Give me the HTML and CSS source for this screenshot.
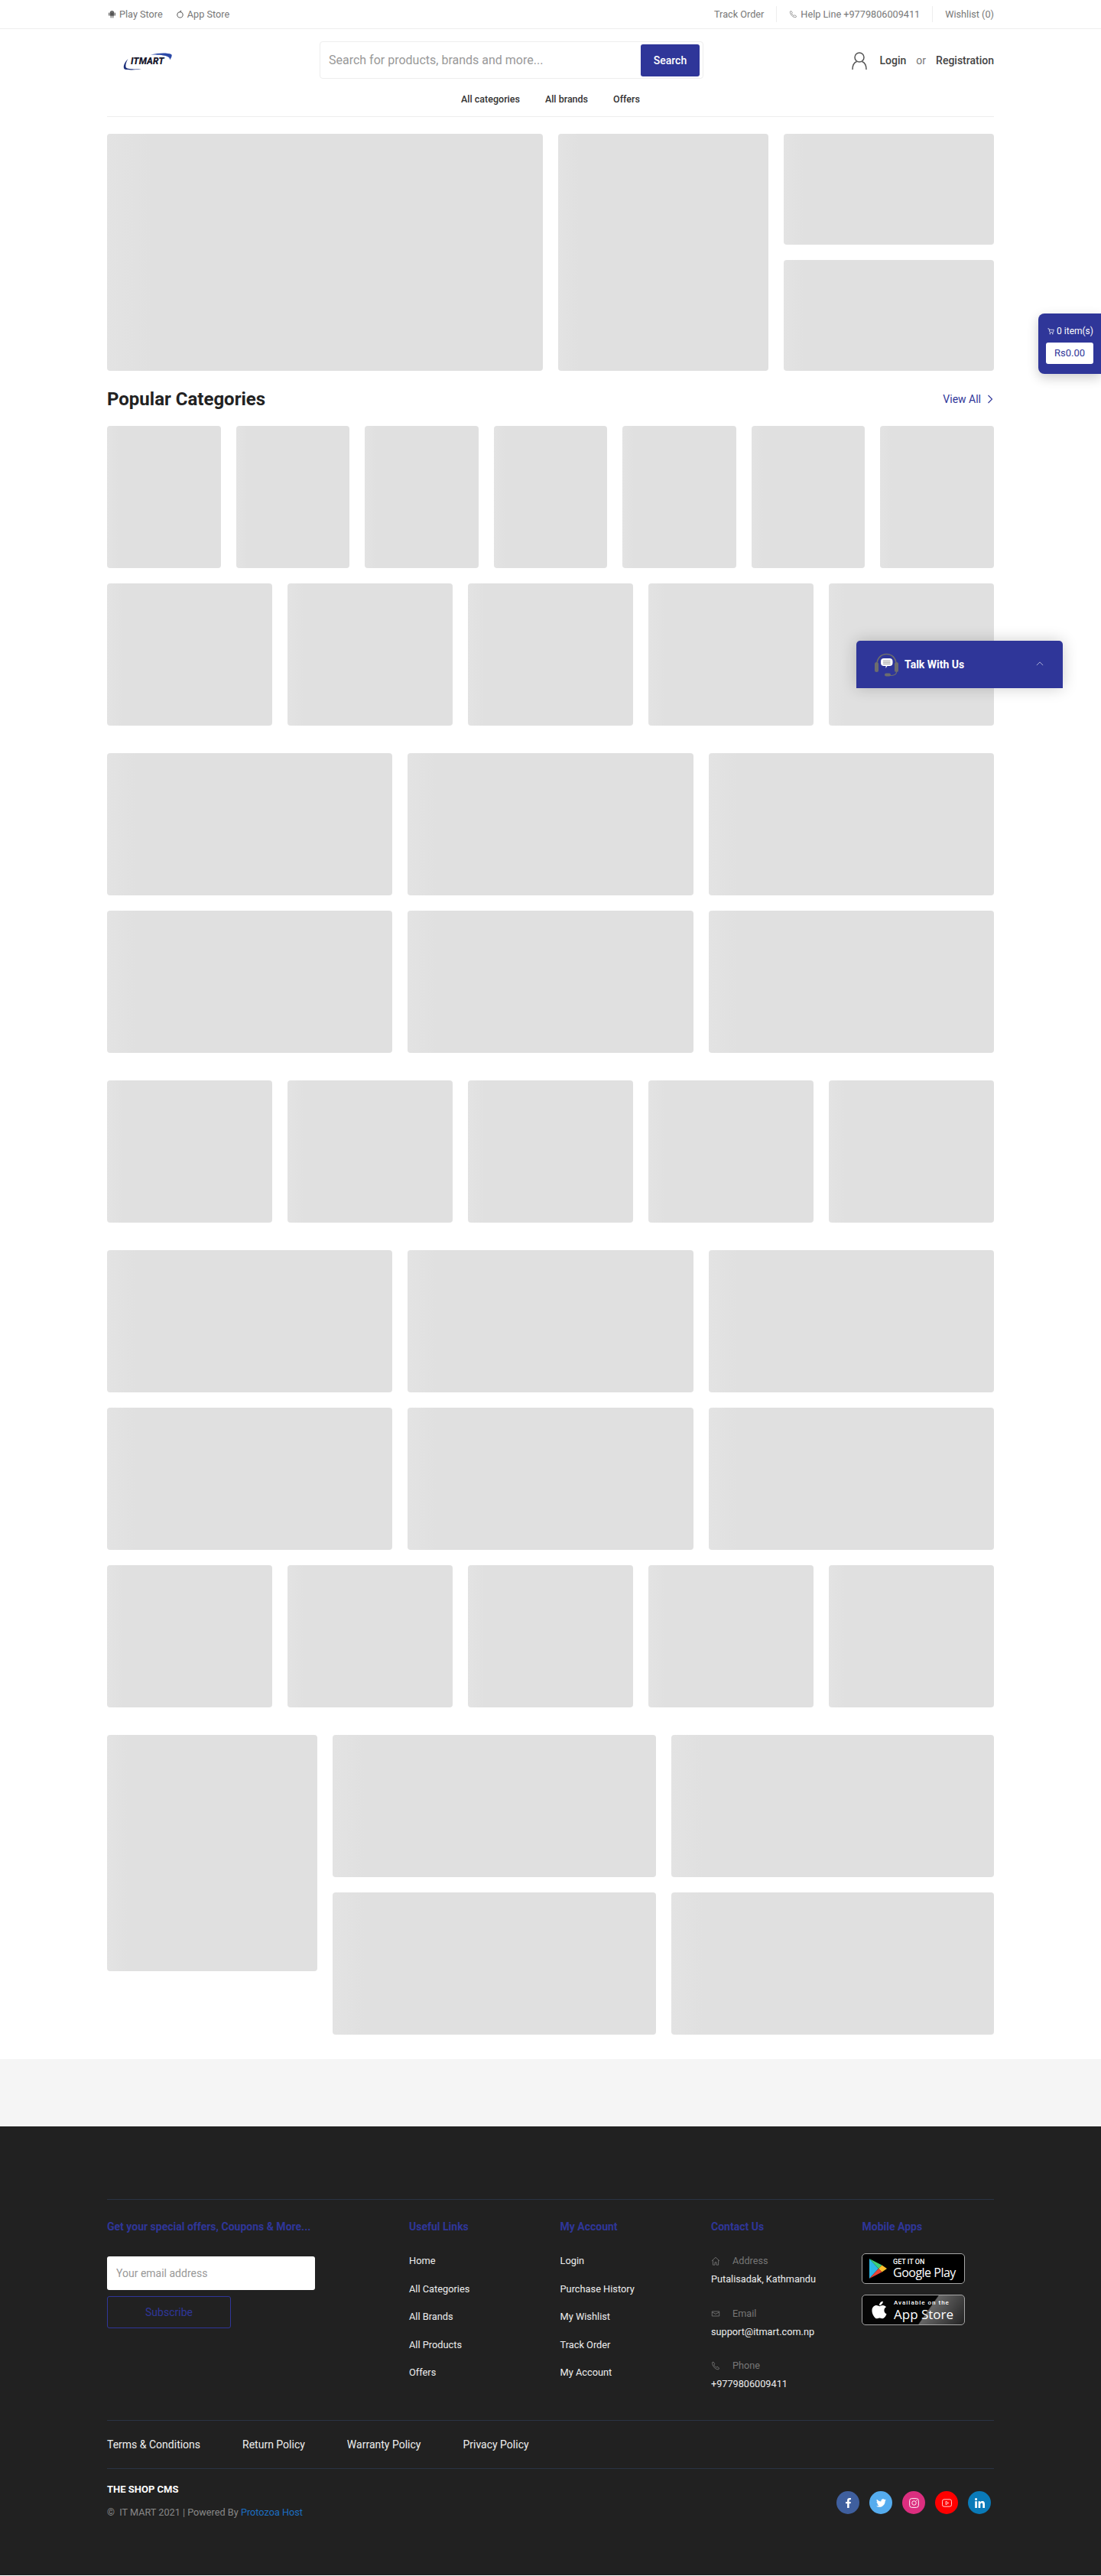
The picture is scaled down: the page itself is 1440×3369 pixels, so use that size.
FILE: index.html
```html
<!DOCTYPE html>
<html lang="en">
<head>
  <meta charset="UTF-8">
  <meta name="viewport" content="width=device-width, initial-scale=1.0">
  <title>IT Mart</title>
  <link rel="stylesheet" href="styles.css">
</head>
<body>
  <div class="top-bar">
    <div class="container top-bar-inner">
      <div class="top-links">
        <a class="top-link" href="#">
          <svg class="top-icon" viewBox="0 0 12 12"><path d="M3 4.2a3 3 0 0 1 6 0v4.3H3z" fill="#555"/><path d="M1.8 4.5v3M10.2 4.5v3M4.6 8.5v2.3M7.4 8.5v2.3" stroke="#555" stroke-width="1.2" fill="none" stroke-linecap="round"/><circle cx="4.7" cy="3" r=".5" fill="#fff"/><circle cx="7.3" cy="3" r=".5" fill="#fff"/></svg>
          Play Store
        </a>
        <a class="top-link" href="#">
          <svg class="top-icon" viewBox="0 0 12 12"><circle cx="6" cy="7" r="4" fill="none" stroke="#555" stroke-width="1.1"/><path d="M6 3c.2-1 .8-1.7 1.8-2" fill="none" stroke="#555" stroke-width="1.1"/></svg>
          App Store
        </a>
      </div>
      <div class="top-right">
        <a class="top-cell" href="#">Track Order</a>
        <a class="top-cell" href="#">
          <svg class="top-icon" viewBox="0 0 24 24"><path d="M6 3l3.5 5-2 2.5c1 2.5 3.5 5 6 6l2.5-2 5 3.5-1.5 3c-9 1-17-8-16.5-16.5z" fill="none" stroke="#777" stroke-width="1.6" stroke-linejoin="round"/></svg>
          Help Line +9779806009411
        </a>
        <a class="top-cell" href="#">Wishlist (0)</a>
      </div>
    </div>
  </div>

  <header class="container site-header">
    <div class="header-row">
      <a class="logo" href="#">
        <svg class="logo-swoosh" viewBox="0 0 64 23"><path d="M36 2.5C46 .2 57 -.5 63 2c1.5 1 .5 4-2 7.5C62 5 56 2.5 36 2.5z" fill="#2b49a8"/><path d="M6.5 8C2 12-1 19 2 21.5c5 1.5 15 1 22-.2-8 .2-18 .5-20-1.8C2.5 17 4 12 6.5 8z" fill="#1c2f7a"/></svg>
        <span class="logo-text">ITMART</span>
      </a>
      <form class="search-box">
        <input class="search-input" type="text" placeholder="Search for products, brands and more...">
        <button class="search-btn" type="button">Search</button>
      </form>
      <div class="account">
        <svg class="user-icon" viewBox="0 0 20 23"><circle cx="10" cy="7" r="6" fill="none" stroke="#555" stroke-width="1.5"/><path d="M1 23c0-6 3-9.5 5.5-10.5M19 23c0-6-3-9.5-5.5-10.5" fill="none" stroke="#555" stroke-width="1.5"/></svg>
        <a class="account-link" href="#">Login</a>
        <span class="account-or">or</span>
        <a class="account-link" href="#">Registration</a>
      </div>
    </div>
    <nav class="main-nav">
      <a href="#">All categories</a>
      <a href="#">All brands</a>
      <a href="#">Offers</a>
    </nav>
  </header>

  <main class="container">
    <section class="hero">
      <div class="ph"></div>
      <div class="ph"></div>
      <div class="hero-side">
        <div class="ph"></div>
        <div class="ph"></div>
      </div>
    </section>

    <div class="section-head">
      <h2>Popular Categories</h2>
      <a class="view-all" href="#">View All
        <svg viewBox="0 0 8 12"><path d="M1.5 1l5 5-5 5" fill="none" stroke="#2f3699" stroke-width="1.1"/></svg>
      </a>
    </div>

    <section class="block">
      <div class="cards cards-7">
        <div class="ph"></div><div class="ph"></div><div class="ph"></div><div class="ph"></div><div class="ph"></div><div class="ph"></div><div class="ph"></div>
      </div>
      <div class="cards cards-5">
        <div class="ph"></div><div class="ph"></div><div class="ph"></div><div class="ph"></div><div class="ph"></div>
      </div>
    </section>

    <section class="block">
      <div class="cards cards-3">
        <div class="ph"></div><div class="ph"></div><div class="ph"></div>
      </div>
      <div class="cards cards-3">
        <div class="ph"></div><div class="ph"></div><div class="ph"></div>
      </div>
    </section>

    <section class="block">
      <div class="cards cards-5">
        <div class="ph"></div><div class="ph"></div><div class="ph"></div><div class="ph"></div><div class="ph"></div>
      </div>
    </section>

    <section class="block">
      <div class="cards cards-3">
        <div class="ph"></div><div class="ph"></div><div class="ph"></div>
      </div>
      <div class="cards cards-3">
        <div class="ph"></div><div class="ph"></div><div class="ph"></div>
      </div>
      <div class="cards cards-5">
        <div class="ph"></div><div class="ph"></div><div class="ph"></div><div class="ph"></div><div class="ph"></div>
      </div>
    </section>

    <section class="last-block">
      <div class="ph last-tall"></div>
      <div class="cards cards-2">
        <div class="ph"></div><div class="ph"></div>
        <div class="ph"></div><div class="ph"></div>
      </div>
    </section>
  </main>

  <div class="grey-band"></div>

  <footer class="site-footer">
    <div class="container">
      <div class="footer-cols">
        <div>
          <h4>Get your special offers, Coupons &amp; More...</h4>
          <form class="subscribe">
            <input class="subscribe-input" type="email" placeholder="Your email address">
            <button class="subscribe-btn" type="button">Subscribe</button>
          </form>
        </div>
        <div>
          <h4>Useful Links</h4>
          <ul class="footer-list">
            <li><a href="#">Home</a></li>
            <li><a href="#">All Categories</a></li>
            <li><a href="#">All Brands</a></li>
            <li><a href="#">All Products</a></li>
            <li><a href="#">Offers</a></li>
          </ul>
        </div>
        <div>
          <h4>My Account</h4>
          <ul class="footer-list">
            <li><a href="#">Login</a></li>
            <li><a href="#">Purchase History</a></li>
            <li><a href="#">My Wishlist</a></li>
            <li><a href="#">Track Order</a></li>
            <li><a href="#">My Account</a></li>
          </ul>
        </div>
        <div>
          <h4>Contact Us</h4>
          <div class="contact-item">
            <div class="contact-label">
              <svg viewBox="0 0 14 14"><path d="M1 7l6-5.5L13 7M2.8 6v7h3V9h2.4v4h3V6" fill="none" stroke="#777" stroke-width="1"/></svg>
              Address
            </div>
            <div class="contact-value">Putalisadak, Kathmandu</div>
          </div>
          <div class="contact-item">
            <div class="contact-label">
              <svg viewBox="0 0 14 14"><path d="M1.5 3.5h11v7h-11zM1.5 4.5L7 7.5l5.5-3" fill="none" stroke="#777" stroke-width="1"/></svg>
              Email
            </div>
            <div class="contact-value">support@itmart.com.np</div>
          </div>
          <div class="contact-item">
            <div class="contact-label">
              <svg viewBox="0 0 24 24"><path d="M6 2l3.5 5.5-2 2.5c1 2.5 3.5 5.5 6 6.5l2.5-2 5 3.5-1.5 3.5c-9 1-17-10-16.5-18z" fill="none" stroke="#777" stroke-width="1.7" stroke-linejoin="round"/></svg>
              Phone
            </div>
            <div class="contact-value">+9779806009411</div>
          </div>
        </div>
        <div class="apps-col">
          <h4>Mobile Apps</h4>
          <a class="badge" href="#">
            <svg class="badge-play" viewBox="0 0 23 26"><path d="M0 0v26l12-13z" fill="#2bb8e8"/><path d="M0 0l12 13 4.5-4.5z" fill="#3ecf7a"/><path d="M16.5 8.5L12 13l4.5 4.5L23 13z" fill="#fbc02d"/><path d="M0 26l16.5-8.5L12 13z" fill="#ea4335"/></svg>
            <span class="badge-text">
              <span class="badge-small">GET IT ON</span>
              <span class="badge-big">Google Play</span>
            </span>
          </a>
          <a class="badge badge-apple" href="#">
            <svg class="badge-logo" viewBox="0 0 384 512"><path fill="#fff" d="M318.7 268.7c-.2-36.7 16.4-64.4 50-84.8-18.8-26.9-47.2-41.7-84.7-44.6-35.5-2.8-74.3 20.7-88.5 20.7-15 0-49.4-19.7-76.4-19.7C63.3 141.2 4 184.8 4 273.5q0 39.3 14.4 81.2c12.8 36.7 59 126.7 107.2 125.2 25.2-.6 43-17.9 75.8-17.9 31.8 0 48.3 17.9 76.4 17.9 48.6-.7 90.4-82.5 102.6-119.3-65.2-30.7-61.7-90-61.7-91.9zm-56.6-164.2c27.3-32.4 24.8-61.9 24-72.5-24.1 1.4-52 16.4-67.9 34.9-17.5 19.8-27.8 44.3-25.6 71.9 26.1 2 49.9-11.4 69.5-34.3z"/></svg>
            <span class="badge-text">
              <span class="badge-small badge-avail">Available on the</span>
              <span class="badge-big badge-store">App Store</span>
            </span>
          </a>
        </div>
      </div>

      <div class="policy-row">
        <a href="#">Terms &amp; Conditions</a>
        <a href="#">Return Policy</a>
        <a href="#">Warranty Policy</a>
        <a href="#">Privacy Policy</a>
      </div>

      <div class="footer-bottom">
        <div>
          <div class="footer-brand">THE SHOP CMS</div>
          <div class="copyright">©&nbsp; IT MART 2021 | Powered By <a href="#">Protozoa Host</a></div>
        </div>
        <div class="socials">
          <a class="social social-fb" href="#"><svg viewBox="0 0 320 512"><path fill="#fff" d="M279.14 288l14.22-92.66h-88.91v-60.13c0-25.35 12.42-50.06 52.24-50.06h40.42V6.26S260.43 0 225.36 0c-73.22 0-121.08 44.38-121.08 124.72v70.62H22.89V288h81.39v224h100.17V288z"/></svg></a>
          <a class="social social-tw" href="#"><svg viewBox="0 0 512 512"><path fill="#fff" d="M459.37 151.716c.325 4.548.325 9.097.325 13.645 0 138.72-105.583 298.558-298.558 298.558-59.452 0-114.68-17.219-161.137-47.106 8.447.974 16.568 1.299 25.34 1.299 49.055 0 94.213-16.568 130.274-44.832-46.132-.975-84.792-31.188-98.112-72.772 6.498.974 12.995 1.624 19.818 1.624 9.421 0 18.843-1.3 27.614-3.573-48.081-9.747-84.143-51.98-84.143-102.985v-1.299c13.969 7.797 30.214 12.67 47.431 13.319-28.264-18.843-46.781-51.005-46.781-87.391 0-19.492 5.197-37.36 14.294-52.954 51.655 63.675 129.3 105.258 216.365 109.807-1.624-7.797-2.599-15.918-2.599-24.04 0-57.828 46.782-104.934 104.934-104.934 30.213 0 57.502 12.67 76.67 33.137 23.715-4.548 46.456-13.32 66.599-25.34-7.798 24.366-24.366 44.833-46.132 57.827 21.117-2.273 41.584-8.122 60.426-16.243-14.292 20.791-32.161 39.308-52.628 54.253z"/></svg></a>
          <a class="social social-ig" href="#"><svg viewBox="0 0 12 12"><rect x=".6" y=".6" width="10.8" height="10.8" rx="2.6" fill="none" stroke="#fff" stroke-width=".9"/><circle cx="6" cy="6" r="2.5" fill="none" stroke="#fff" stroke-width=".9"/><circle cx="9.1" cy="2.9" r=".6" fill="#fff"/></svg></a>
          <a class="social social-yt" href="#"><svg class="yt-icon" viewBox="0 0 14 11"><rect x=".5" y=".5" width="13" height="10" rx="2.5" fill="none" stroke="#fff" stroke-width=".9"/><path d="M5.5 3.2l3.8 2.3-3.8 2.3z" fill="none" stroke="#fff" stroke-width=".9"/></svg></a>
          <a class="social social-in" href="#"><svg viewBox="0 0 448 448"><path fill="#fff" d="M100.28 448H7.4V148.9h92.88zM53.79 108.1C24.09 108.1 0 83.5 0 53.8a53.79 53.79 0 0 1 107.58 0c0 29.7-24.1 54.3-53.79 54.3zM447.9 448h-92.68V302.4c0-34.7-.7-79.2-48.29-79.2-48.29 0-55.69 37.7-55.69 76.7V448h-92.78V148.9h89.08v40.8h1.3c12.4-23.5 42.69-48.3 87.88-48.3 94 0 111.28 61.9 111.28 142.3V448z"/></svg></a>
        </div>
      </div>
    </div>
  </footer>

  <aside class="cart-widget">
    <div class="cart-count">
      <svg viewBox="0 0 12 12"><path d="M.5 1h2l1.500 6.500h6L11 3H3" fill="none" stroke="#fff" stroke-width="1"/><circle cx="4.5" cy="10" r="1.1" fill="#fff"/><circle cx="9" cy="10" r="1.1" fill="#fff"/></svg>
      <span>0 item(s)</span>
    </div>
    <div class="cart-price">Rs0.00</div>
  </aside>

  <aside class="chat-widget">
    <svg class="chat-icon" viewBox="0 0 31 31">
      <path d="M3 15C3 6 9 1.5 15.5 1.5S28 6 28 15" fill="none" stroke="#6d6d6d" stroke-width="1.6"/>
      <rect x="0" y="12" width="5" height="13" rx="2.5" fill="#6d6d6d"/>
      <rect x="26" y="12" width="5" height="13" rx="2.5" fill="#6d6d6d"/>
      <path d="M28.5 25c0 3-4 4.500-8.500 4.500" fill="none" stroke="#6d6d6d" stroke-width="1.2"/>
      <rect x="13" y="26.5" width="8" height="4" rx="2" fill="#6d6d6d"/>
      <path d="M12 7h7.5a4 4 0 0 1 4 4v2a4 4 0 0 1-4 4h-3l-2 3v-3h-2.500a4 4 0 0 1-4-4v-2a4 4 0 0 1 4-4z" fill="#fff"/>
      <path d="M11 10h9.500M11 12.200h9.500M11 14.400h9.500" stroke="#a9a9a9" stroke-width="1.2"/>
    </svg>
    <span class="chat-title">Talk With Us</span>
    <svg class="chat-arrow" viewBox="0 0 12 7"><path d="M1 6l5-5 5 5" fill="none" stroke="#a9add6" stroke-width="1.2"/></svg>
  </aside>
</body>
</html>
```

FILE: styles.css
```css
* {
  box-sizing: border-box;
  margin: 0;
  padding: 0;
}

body {
  font-family: 'Roboto', 'Liberation Sans', sans-serif;
  background-color: #fff;
  color: #333;
  position: relative;
}

a {
  color: inherit;
  text-decoration: none;
}

.container {
  width: 1160px;
  margin: 0 auto;
}

/* top bar */
.top-bar {
  height: 38px;
  border-bottom: 1px solid #eee;
  font-size: 12.7px;
  color: #777;
}

.top-bar-inner {
  height: 37px;
  display: flex;
  justify-content: space-between;
  align-items: center;
}

.top-links {
  display: flex;
  gap: 17px;
  padding-left: 1px;
}

.top-link {
  display: flex;
  align-items: center;
  gap: 4px;
}

.top-icon {
  width: 11px;
  height: 11px;
  flex: none;
}

.top-right {
  display: flex;
  align-items: center;
}

.top-cell {
  display: flex;
  align-items: center;
  gap: 4px;
  height: 21px;
  padding: 0 16px;
  border-left: 1px solid #eee;
}

.top-cell:first-child {
  border-left: none;
}

.top-cell:last-child {
  padding-right: 0;
}

/* header */
.site-header {
  height: 115px;
  border-bottom: 1px solid #eee;
}

.header-row {
  display: flex;
  align-items: flex-start;
  padding-top: 16px;
  height: 65px;
}

.logo {
  position: relative;
  display: block;
  width: 64px;
  height: 23px;
  margin: 15px 0 0 21px;
}

.logo-swoosh {
  display: block;
  width: 64px;
  height: 23px;
}

.logo-text {
  position: absolute;
  left: 10px;
  top: 4px;
  font-size: 12px;
  line-height: 15px;
  font-weight: 900;
  font-style: italic;
  color: #1a1a2e;
}

.search-box {
  display: flex;
  align-items: center;
  justify-content: space-between;
  width: 502px;
  height: 49px;
  margin-left: 193px;
  padding: 0 4px 0 11px;
  border: 1px solid #eee;
  border-radius: 4px;
}

.search-input {
  flex: 1;
  border: none;
  outline: none;
  font-family: inherit;
  font-size: 16px;
  color: #333;
}

.search-input::placeholder {
  color: #999;
}

.search-btn {
  width: 77px;
  height: 42px;
  border: none;
  border-radius: 3px;
  background-color: #2f3699;
  color: #fff;
  font-family: inherit;
  font-size: 14px;
  font-weight: 500;
}

.account {
  display: flex;
  align-items: center;
  margin-left: auto;
  margin-top: 14px;
  height: 22px;
  font-size: 14px;
  color: #444;
}

.user-icon {
  width: 20px;
  height: 23px;
  margin-right: 17px;
}

.account-link {
  font-weight: 500;
}

.account-or {
  margin: 0 13px;
  color: #777;
}

.main-nav {
  display: flex;
  justify-content: center;
  gap: 33px;
  padding-top: 17px;
  font-size: 12.5px;
  line-height: 20px;
  font-weight: 500;
  color: #333;
}

/* placeholders */
.ph {
  background: linear-gradient(to right, #e3e3e3 0, #e0e0e0 10%);
  border-radius: 4px;
  height: 186px;
}

main {
  padding-top: 22px;
}

.hero {
  display: grid;
  grid-template-columns: 570px 275px 275px;
  gap: 20px;
}

.hero > .ph {
  height: 310px;
}

.hero-side {
  display: flex;
  flex-direction: column;
  gap: 20px;
}

.hero-side .ph {
  height: 145px;
}

.section-head {
  display: flex;
  justify-content: space-between;
  align-items: center;
  height: 72px;
  padding-top: 2px;
}

.section-head h2 {
  font-size: 24px;
  font-weight: 700;
  color: #222;
}

.view-all {
  display: flex;
  align-items: center;
  gap: 8px;
  font-size: 14px;
  color: #2f3699;
}

.view-all svg {
  width: 8px;
  height: 12px;
  margin-right: 1px;
}

.block {
  display: flex;
  flex-direction: column;
  gap: 20px;
  margin-bottom: 36px;
}

.cards {
  display: grid;
  gap: 20px;
}

.cards-7 {
  grid-template-columns: repeat(7, 1fr);
}

.cards-5 {
  grid-template-columns: repeat(5, 1fr);
}

.cards-3 {
  grid-template-columns: repeat(3, 1fr);
}

.cards-2 {
  grid-template-columns: repeat(2, 1fr);
}

.last-block {
  display: grid;
  grid-template-columns: 275px 1fr;
  gap: 20px;
  align-items: start;
  padding-bottom: 32px;
}

.ph.last-tall {
  height: 309px;
}

.grey-band {
  height: 88px;
  background-color: #f5f5f5;
}

/* footer */
.site-footer {
  height: 587px;
  padding-top: 95px;
  background-color: #212121;
  color: #eee;
}

.footer-cols {
  display: grid;
  grid-template-columns: 395px 197.5px 197.5px 197.5px 172.5px;
  height: 289px;
  padding-top: 25px;
  border-top: 1px solid #2a3445;
}

.footer-cols h4 {
  font-size: 14px;
  line-height: 20px;
  font-weight: 700;
  color: #2f3699;
  margin-bottom: 25px;
}

.subscribe {
  padding-top: 4px;
}

.subscribe-input {
  display: block;
  width: 272px;
  height: 44px;
  padding: 0 12px;
  border: none;
  border-radius: 3px;
  background: #fff;
  font-family: inherit;
  font-size: 14px;
}

.subscribe-input::placeholder {
  color: #999;
}

.subscribe-btn {
  display: block;
  width: 162px;
  height: 42px;
  margin-top: 8px;
  border: 1px solid #2f3699;
  border-radius: 3px;
  background: transparent;
  color: #2f3699;
  font-family: inherit;
  font-size: 14px;
}

.footer-list {
  list-style: none;
  font-size: 12.8px;
  line-height: 20px;
}

.footer-list li {
  margin-bottom: 16.6px;
}

.contact-item {
  margin-bottom: 24.6px;
  font-size: 12.7px;
  line-height: 20px;
}

.contact-label {
  display: flex;
  align-items: center;
  gap: 16px;
  color: #777;
  margin-bottom: 4px;
}

.contact-label svg {
  width: 12px;
  height: 12px;
  flex: none;
}

.contact-value {
  color: #eee;
}

.apps-col .badge {
  margin-left: -0.5px;
}

.badge {
  display: flex;
  align-items: center;
  width: 135px;
  height: 40px;
  margin-bottom: 14px;
  padding-left: 9px;
  border: 1px solid #a6a6a6;
  border-radius: 5px;
  background: #000;
  color: #fff;
}

.badge-apple {
  padding-left: 11px;
  background: linear-gradient(125deg, #050505 0, #050505 62%, #666 63%, #222 100%);
}

.badge-play {
  width: 23px;
  height: 26px;
  flex: none;
}

.badge-logo {
  width: 22px;
  height: 26px;
  flex: none;
}

.badge-text {
  display: flex;
  flex-direction: column;
  margin-left: 8px;
}

.badge-small {
  font-size: 9px;
  line-height: 10px;
  font-weight: 500;
}

.badge-big {
  font-family: 'Open Sans', 'Roboto', sans-serif;
  font-size: 16px;
  line-height: 19px;
  letter-spacing: -0.5px;
  font-weight: 500;
}

.badge-avail {
  font-size: 8px;
  letter-spacing: 1px;
}

.badge-store {
  font-size: 17px;
  letter-spacing: 0;
}

.policy-row {
  display: flex;
  align-items: center;
  gap: 55px;
  height: 64px;
  border-top: 1px solid #2a3445;
  border-bottom: 1px solid #2a3445;
  font-size: 14px;
}

.footer-bottom {
  display: flex;
  justify-content: space-between;
  align-items: flex-start;
  padding-top: 17px;
}

.footer-brand {
  font-size: 13px;
  line-height: 20px;
  font-weight: 700;
  color: #fff;
}

.copyright {
  margin-top: 9.5px;
  font-size: 12.7px;
  line-height: 20px;
  color: #888;
}

.copyright a {
  color: #1b6ec2;
}

.socials {
  display: flex;
  gap: 13px;
  margin: 12px 4px 0 0;
}

.social {
  display: flex;
  align-items: center;
  justify-content: center;
  width: 30px;
  height: 30px;
  border-radius: 50%;
}

.social svg {
  height: 13px;
  width: 13px;
}

.social .yt-icon {
  width: 13px;
  height: 11px;
}

.social-fb {
  background-color: #3f5f9e;
}

.social-tw {
  background-color: #55acee;
}

.social-ig {
  background-color: #dc2e7f;
}

.social-yt {
  background-color: #f00;
}

.social-in {
  background-color: #0a7ab8;
}

/* floating widgets */
.cart-widget {
  position: absolute;
  top: 410px;
  right: 0;
  width: 82px;
  height: 79px;
  padding: 13px 10px 0 12px;
  border-radius: 8px 0 0 8px;
  background-color: #2f3699;
  box-shadow: 0 5px 15px rgba(0, 0, 0, 0.2);
  color: #fff;
}

.cart-count {
  display: flex;
  align-items: center;
  justify-content: space-between;
  font-size: 12px;
  line-height: 20px;
  white-space: nowrap;
}

.cart-count svg {
  width: 9px;
  height: 9px;
}

.cart-price {
  margin: 5px 0 0 -2px;
  height: 28px;
  border-radius: 3px;
  background: #fff;
  color: #2f3699;
  font-size: 13px;
  line-height: 28px;
  text-align: center;
}

.chat-widget {
  position: absolute;
  top: 838px;
  left: 1120px;
  display: flex;
  align-items: center;
  width: 270px;
  height: 62px;
  padding: 0 25px 0 24px;
  border-radius: 5px 5px 0 0;
  background-color: #2f3699;
  box-shadow: 0 0 20px rgba(0, 0, 0, 0.2);
  color: #fff;
}

.chat-icon {
  width: 31px;
  height: 31px;
  flex: none;
}

.chat-title {
  margin-left: 8px;
  font-size: 14px;
  font-weight: 700;
}

.chat-arrow {
  width: 10px;
  height: 6px;
  margin-left: auto;
  margin-bottom: 2px;
}
```
